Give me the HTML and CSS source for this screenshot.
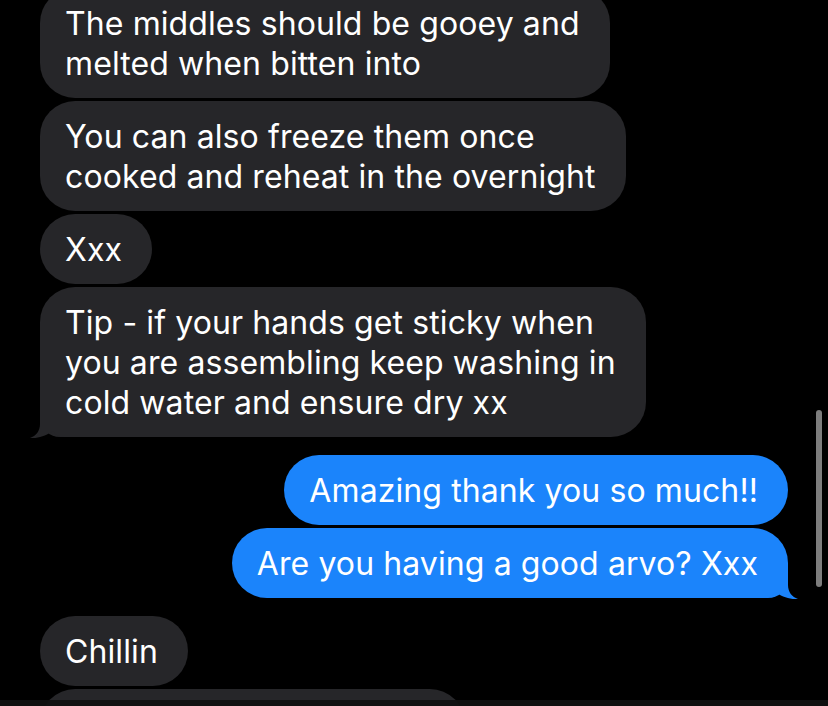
FILE: index.html
```html
<!DOCTYPE html>
<html>
<head>
<meta charset="utf-8">
<link rel="stylesheet" href="styles.css">
</head>
<body>
<div class="screen">
  <div class="chat">
    <div class="group in">
      <div class="bubble">The middles should be gooey and<br>melted when bitten into</div>
      <div class="bubble">You can also freeze them once<br>cooked and reheat in the overnight</div>
      <div class="bubble">Xxx</div>
      <div class="bubble tail">Tip - if your hands get sticky when<br>you are assembling keep washing in<br>cold water and ensure dry xx
        <svg class="tail-svg" viewBox="0 0 40 36" width="40" height="36"><path d="M10 0 L10 22 C10 29 6 34 0 36 C8 37 17 33 23 29 Q27 35 35 35 L40 35 L40 0 Z"/></svg>
      </div>
    </div>
    <div class="group out">
      <div class="bubble">Amazing thank you so much!!</div>
      <div class="bubble tail">Are you having a good arvo? Xxx
        <svg class="tail-svg" viewBox="0 0 40 36" width="40" height="36"><path d="M10 0 L10 22 C10 29 6 34 0 36 C8 37 17 33 23 29 Q27 35 35 35 L40 35 L40 0 Z"/></svg>
      </div>
    </div>
    <div class="group in">
      <div class="bubble">Chillin</div>
      <div class="bubble partial"></div>
    </div>
  </div>
  <div class="scrollbar"></div>
  <div class="bottom-bar"></div>
</div>
</body>
</html>
```
FILE: styles.css
```css
html, body {
  margin: 0;
  padding: 0;
  background: #000;
}
.screen {
  position: relative;
  width: 828px;
  height: 706px;
  overflow: hidden;
  background: #000;
  font-family: Inter, "Noto Sans", sans-serif;
  color: #fff;
}
.chat {
  display: flex;
  flex-direction: column;
  gap: 18px;
  margin-top: -12px;
  padding: 0 40px;
}
.group {
  display: flex;
  flex-direction: column;
  gap: 3px;
}
.group.in { align-items: flex-start; }
.group.out { align-items: flex-end; }
.bubble {
  position: relative;
  z-index: 0;
  font-size: 32px;
  letter-spacing: 0.1px;
  line-height: 40px;
  padding: 16px 30px 14px 25px;
  border-radius: 35px;
  background: #262629;
  white-space: nowrap;
}
.out .bubble {
  background: #1b84fb;
}
.tail-svg {
  position: absolute;
  z-index: -1;
  bottom: -1px;
  left: -10px;
  fill: #262629;
}
.in .bubble.tail { border-bottom-left-radius: 20px; }
.out .bubble.tail { border-bottom-right-radius: 20px; }
.out .tail-svg {
  left: auto;
  right: -10px;
  transform: scaleX(-1);
  fill: #1b84fb;
}
.bubble.partial {
  width: 370px;
  height: 40px;
}
.scrollbar {
  position: absolute;
  left: 816px;
  top: 410px;
  width: 6px;
  height: 177px;
  border-radius: 3px;
  background: #7d7d7d;
}
.bottom-bar {
  position: absolute;
  left: 0;
  right: 0;
  bottom: 0;
  height: 6px;
  background: rgba(16, 16, 16, 0.93);
}
```
